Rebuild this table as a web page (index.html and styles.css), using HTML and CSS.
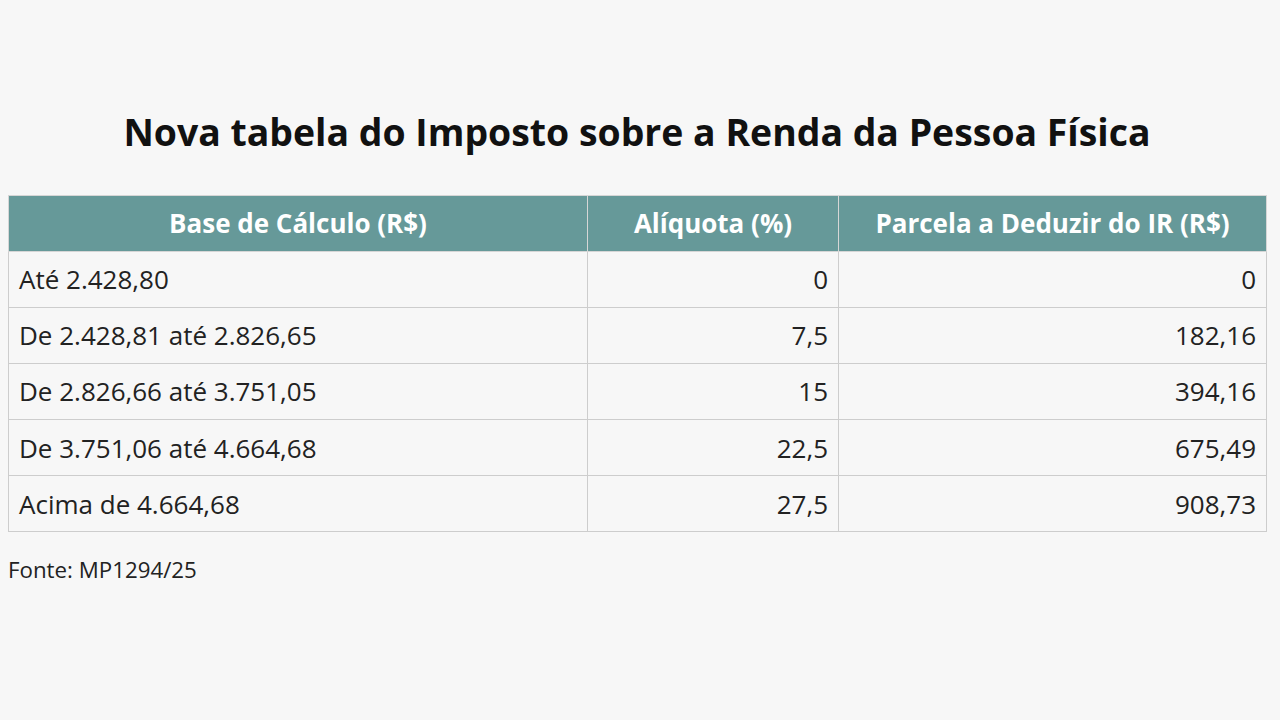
FILE: index.html
```html
<!DOCTYPE html>
<html lang="pt-BR">
<head>
<meta charset="utf-8">
<title>Nova tabela do Imposto sobre a Renda da Pessoa Física</title>
<link rel="stylesheet" href="styles.css">
</head>
<body>
<main class="page">
  <h1 class="title">Nova tabela do Imposto sobre a Renda da Pessoa Física</h1>
  <table class="tax-table">
    <colgroup>
      <col class="col-base">
      <col class="col-rate">
      <col class="col-deduct">
    </colgroup>
    <thead>
      <tr>
        <th>Base de Cálculo (R$)</th>
        <th>Alíquota (%)</th>
        <th>Parcela a Deduzir do IR (R$)</th>
      </tr>
    </thead>
    <tbody>
      <tr><td>Até 2.428,80</td><td class="num">0</td><td class="num">0</td></tr>
      <tr><td>De 2.428,81 até 2.826,65</td><td class="num">7,5</td><td class="num">182,16</td></tr>
      <tr><td>De 2.826,66 até 3.751,05</td><td class="num">15</td><td class="num">394,16</td></tr>
      <tr><td>De 3.751,06 até 4.664,68</td><td class="num">22,5</td><td class="num">675,49</td></tr>
      <tr><td>Acima de 4.664,68</td><td class="num">27,5</td><td class="num">908,73</td></tr>
    </tbody>
  </table>
  <p class="source">Fonte: MP1294/25</p>
</main>
</body>
</html>
```

FILE: styles.css
```css
html, body {
  margin: 0;
  padding: 0;
  background: #f7f7f7;
}
body {
  font-family: "Open Sans", "Liberation Sans", sans-serif;
  color: #222;
}
.page {
  padding: 106px 14px 0 8px;
}
.title {
  margin: 0 0 37px;
  text-align: center;
  font-size: 37.4px;
  font-weight: 700;
  line-height: 52px;
  color: #111;
}
.tax-table {
  width: 1258px;
  border-collapse: collapse;
  table-layout: fixed;
}
.col-base { width: 579px; }
.col-rate { width: 251px; }
.col-deduct { width: 428px; }
.tax-table th,
.tax-table td {
  border: 1.5px solid #cdcdcd;
  padding: 0 10px;
  font-size: 26px;
  line-height: 30px;
}
.tax-table th {
  background: #669999;
  color: #fff;
  font-weight: 700;
  height: 54.5px;
  text-align: center;
  border-color: #d6d6d6;
}
.tax-table td {
  height: 55.2px;
  text-align: left;
}
.tax-table td.num {
  text-align: right;
}
.source {
  margin: 23px 0 0;
  font-size: 22.3px;
  line-height: 30px;
  color: #222;
}
```
